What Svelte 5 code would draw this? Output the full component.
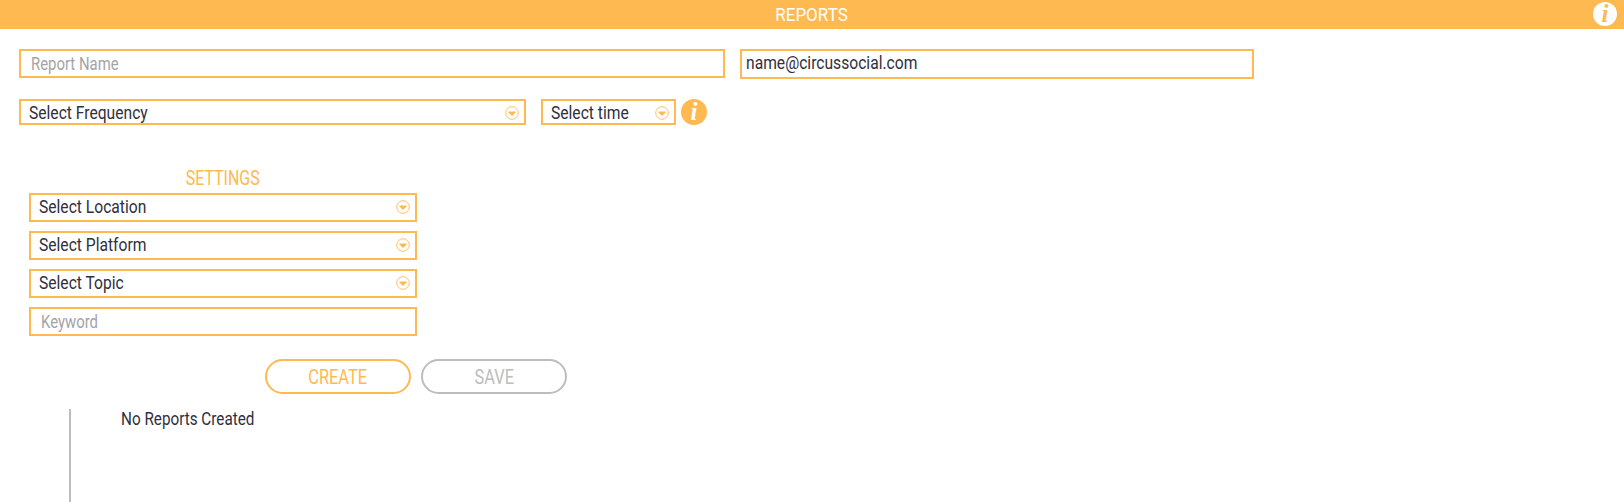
<script>
	const settings = ['Select Location', 'Select Platform', 'Select Topic'];
</script>

{#snippet chevron()}
	<svg class="chevron" viewBox="0 0 14 14" aria-hidden="true">
		<circle cx="7" cy="7" r="6.3" fill="none" stroke="#ffb951" stroke-width="0.9" />
		<path d="M3.4 5.6h7.2v0.9L7 9.9 3.4 6.5z" fill="#ffb951" />
	</svg>
{/snippet}

<header class="topbar">
	<span class="t t-center title">REPORTS</span>
	<i class="info info-light">i</i>
</header>

<main class="page">
	<div class="row">
		<div class="field name"><span class="t hint">Report Name</span></div>
		<div class="field email"><span class="t">name@circussocial.com</span></div>
	</div>

	<div class="row freq-row">
		<div class="select freq"><span class="t">Select Frequency</span> {@render chevron()}</div>
		<div class="select time"><span class="t">Select time</span> {@render chevron()}</div>
		<i class="info">i</i>
	</div>

	<section class="settings">
		<h2><span class="t t-center">SETTINGS</span></h2>
		{#each settings as label}
			<div class="select tall"><span class="t">{label}</span> {@render chevron()}</div>
		{/each}
		<div class="field keyword"><span class="t hint">Keyword</span></div>
	</section>

	<div class="actions">
		<button class="pill create"><span class="t t-center">CREATE</span></button>
		<button class="pill save"><span class="t t-center">SAVE</span></button>
	</div>

	<div class="list"><span class="t">No Reports Created</span></div>
</main>

<style>
	:global(body) {
		background: #fff;
		overflow: hidden;
	}

	.topbar,
	.page {
		font-family: 'Roboto', sans-serif;
		color: #2f2f3d;
		font-size: 18.5px;
	}

	/* no narrow face installed, so squeeze Roboto */
	.t {
		display: inline-block;
		white-space: nowrap;
		transform: scaleX(var(--sx, 0.845));
		transform-origin: left center;
	}

	.t-center {
		transform-origin: center;
	}

	.hint {
		--sx: 0.805;
		color: #a3a3a8;
	}

	.topbar {
		display: flex;
		align-items: center;
		justify-content: center;
		position: relative;
		height: 29px;
		background: #ffb951;
		color: #fff;
		font-size: 19px;
	}

	.title {
		--sx: 0.895;
	}

	.info {
		display: inline-flex;
		align-items: center;
		justify-content: center;
		width: 26px;
		height: 26px;
		margin-left: 5px;
		border-radius: 50%;
		background: #ffb951;
		color: #fff;
		font: italic bold 25px 'Liberation Serif', serif;
	}

	.info-light {
		position: absolute;
		top: 2px;
		right: 7px;
		width: 24px;
		height: 24px;
		margin: 0;
		background: #fff;
		color: #ffb951;
	}

	.row {
		display: flex;
		margin: 20px 0 0 19px;
	}

	.freq-row {
		margin-top: 20px;
		align-items: center;
	}

	.field,
	.select {
		display: flex;
		align-items: center;
		box-sizing: border-box;
		border: 2px solid #ffb951;
		background: #fff;
	}

	.name {
		width: 706px;
		height: 29px;
		padding: 0 10px;
	}

	.email {
		width: 514px;
		height: 30px;
		margin-left: 15px;
		padding: 0 4px 3px;
	}

	.select {
		justify-content: space-between;
		padding: 1px 5px 0 8px;
		height: 26px;
	}

	.freq {
		width: 507px;
	}

	.time {
		width: 135px;
		margin-left: 15px;
	}

	.chevron {
		width: 14px;
		height: 14px;
		flex: none;
	}

	.settings {
		display: flex;
		flex-direction: column;
		gap: 9px;
		width: 388px;
		margin: 42px 0 0 29px;
	}

	h2 {
		margin: 0 0 -9px;
		height: 26px;
		line-height: 23px;
		font-size: 21px;
		font-weight: 400;
		text-align: center;
		color: #ffb951;
		--sx: 0.76;
	}

	.select.tall,
	.keyword {
		height: 29px;
	}

	.select.tall {
		padding: 0 5px 2px 8px;
	}

	.keyword {
		padding: 0 10px;
	}

	.actions {
		display: flex;
		gap: 10px;
		margin: 23px 0 0 265px;
	}

	.pill {
		width: 146px;
		height: 35px;
		border-radius: 18px;
		border: 2px solid #ffb951;
		background: #fff;
		color: #ffb951;
		font: inherit;
		font-size: 21px;
		--sx: 0.78;
	}

	.save {
		border-color: #bdbdbd;
		color: #bdbdbd;
	}

	.list {
		height: 93px;
		margin: 15px 0 0 69px;
		padding-left: 50px;
		border-left: 2px solid #bdbdbd;
		line-height: 20px;
		--sx: 0.825;
	}
</style>
